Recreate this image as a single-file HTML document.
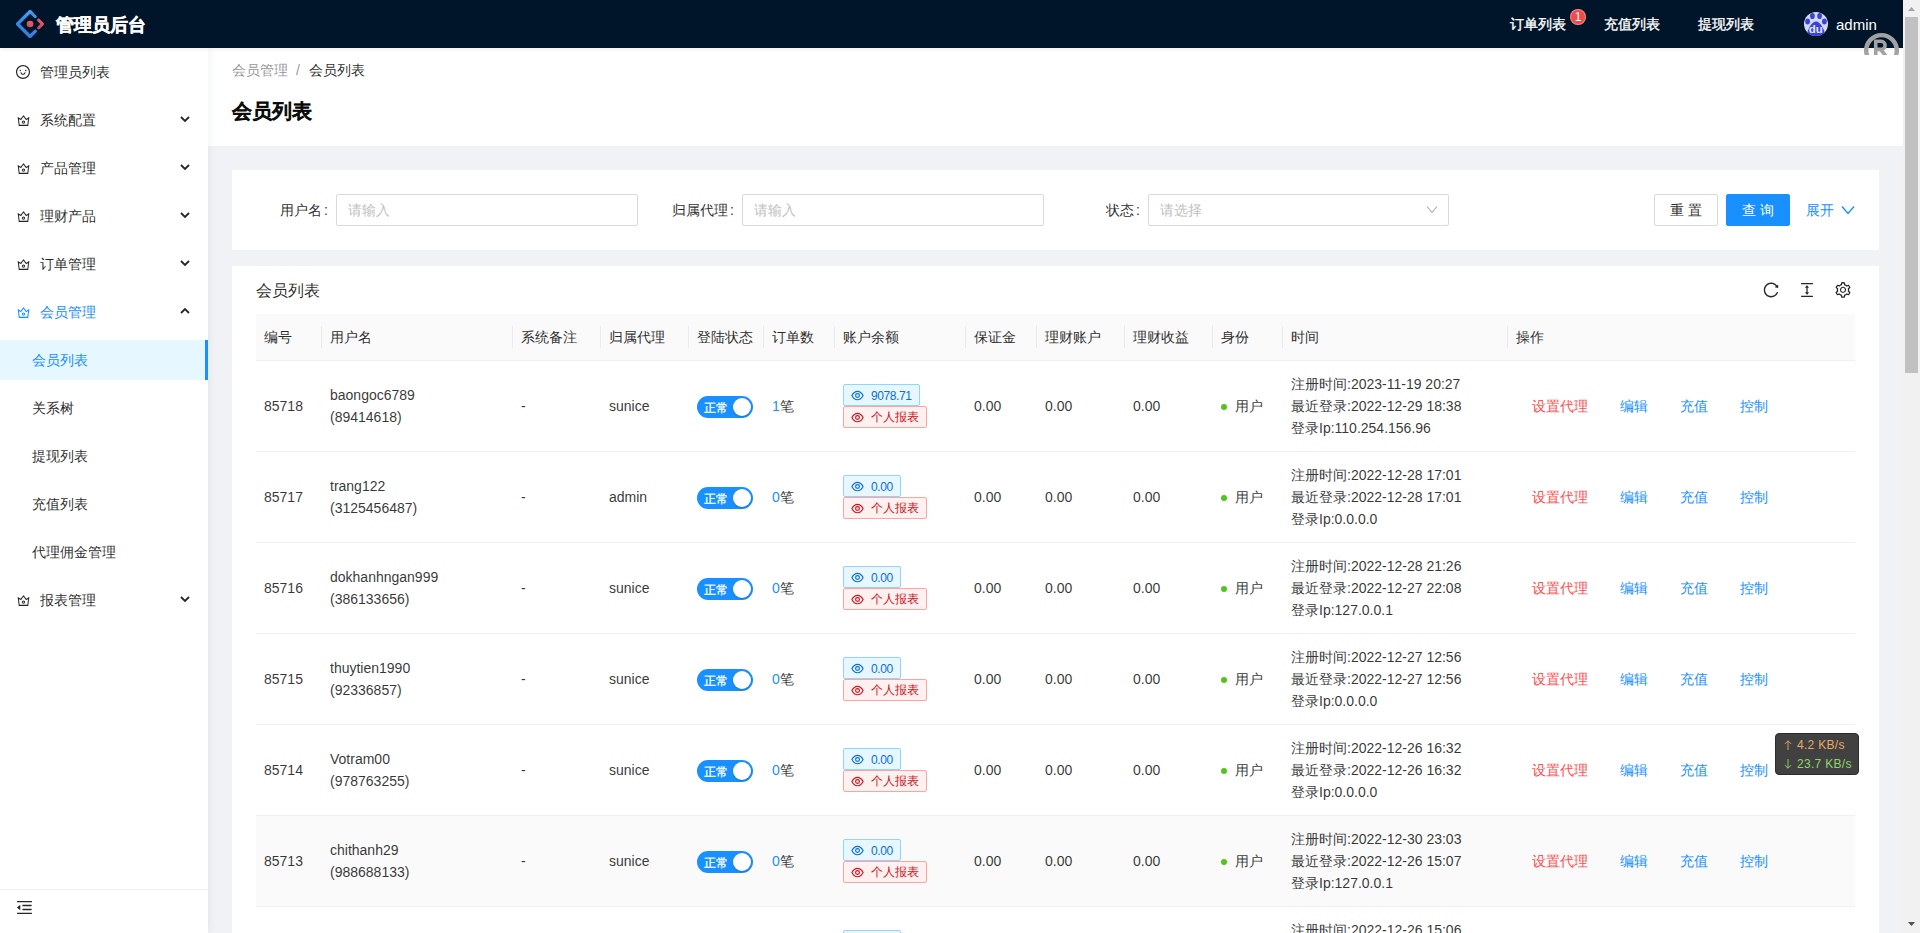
<!DOCTYPE html><html><head><meta charset="utf-8"><title>会员列表</title><style>
*{box-sizing:border-box;margin:0;padding:0}
html,body{width:1920px;height:933px;overflow:hidden;background:#f0f2f5}
body{position:relative;font-family:"Liberation Sans",sans-serif;font-size:14px;color:rgba(0,0,0,.85);line-height:22px}
.abs{position:absolute}
#hdr{left:0;top:0;width:1903px;height:48px;background:#001529;color:#fff;z-index:3;box-shadow:0 1px 4px rgba(0,21,41,.08)}
#side{left:0;top:48px;width:208px;height:885px;background:#fff;box-shadow:2px 0 8px 0 rgba(29,35,41,.05);z-index:2}
.mi{position:absolute;left:0;width:208px;height:40px;line-height:40px}
.mi .ic{position:absolute;left:16px;top:13px}
.mi .tx{position:absolute;left:40px;top:0}
.mi .ar{position:absolute;left:180px;top:15px}
.sub .tx{left:32px}
.sel{background:#e6f7ff;color:#1890ff}
.sel::after{content:"";position:absolute;right:0;top:0;bottom:0;border-right:3px solid #1890ff}
#phdr{left:208px;top:48px;width:1695px;height:98px;background:#fff}
.card{background:#fff}
.inp{position:absolute;height:32px;border:1px solid #d9d9d9;border-radius:2px;background:#fff;color:#bfbfbf;padding-left:11px;line-height:30px}
.lbl{position:absolute;line-height:32px;text-align:right}
.btn{position:absolute;height:32px;border:1px solid #d9d9d9;border-radius:2px;background:#fff;text-align:center;line-height:30px}
.btnp{background:#1890ff;border-color:#1890ff;color:#fff}
table{border-collapse:collapse;table-layout:fixed;width:1599px}
th{position:relative;background:#fafafa;font-weight:500;text-align:left;padding:12px 8px;border-bottom:1px solid #f0f0f0;height:46px}
th.s::before{content:"";position:absolute;right:0;top:50%;width:1px;height:22px;margin-top:-11px;background:rgba(0,0,0,.06)}
td{padding:12px 8px;border-bottom:1px solid #f0f0f0;height:91px;color:rgba(0,0,0,.8);vertical-align:middle;word-break:keep-all;white-space:nowrap}
tr.hov td{background:#fafafa}
.sw{display:inline-block;position:relative;width:56px;height:22px;border-radius:11px;background:#1890ff;vertical-align:middle}
.sw .k{position:absolute;right:2px;top:2px;width:18px;height:18px;border-radius:9px;background:#fff;box-shadow:0 1px 2px rgba(0,35,11,.2)}
.sw .t{position:absolute;left:7px;top:1px;line-height:22px;color:#fff;font-size:12px;-webkit-text-stroke:.3px #fff}
.tag{display:inline-block;height:22px;line-height:20px;padding:0 7px;border:1px solid;border-radius:2px;font-size:12px;white-space:nowrap}
.tb{color:#096dd9;background:#e6f7ff;border-color:#91d5ff;letter-spacing:-.4px}
.tr{color:#cf1322;background:#fff1f0;border-color:#ffa39e}
.tags{display:flex;flex-direction:column;align-items:flex-start}
.tag svg{vertical-align:-3px;margin-right:7px}
.tag .n{position:relative;top:1px}
.dot{display:inline-block;width:6px;height:6px;border-radius:3px;background:#52c41a;vertical-align:middle;margin-right:8px;position:relative;top:0}
.lk{color:#1890ff}
.lr{color:#ff4d4f}
</style></head><body>
<div id="hdr" class="abs">
<div class="abs" style="left:16px;top:10px;width:28px;height:28px"><svg width="28" height="28" viewBox="0 0 200 200"><defs><linearGradient x1="62.1%" y1="0%" x2="108.2%" y2="37.9%" id="la"><stop stop-color="#3f86e0" offset="0%"/><stop stop-color="#4aa6ee" offset="100%"/></linearGradient><linearGradient x1="69.6%" y1="0%" x2="54%" y2="108.5%" id="lb"><stop stop-color="#4aa6ee" offset="0%"/><stop stop-color="#3a8ae4" offset="37.9%"/><stop stop-color="#3478dc" offset="100%"/></linearGradient><linearGradient x1="69.7%" y1="-12.6%" x2="16.7%" y2="117.4%" id="lc"><stop stop-color="#e86a6a" offset="0%"/><stop stop-color="#e05060" offset="41.5%"/><stop stop-color="#d84050" offset="100%"/></linearGradient><linearGradient x1="68.1%" y1="-35.7%" x2="30.4%" y2="114.7%" id="ld"><stop stop-color="#e87070" offset="0%"/><stop stop-color="#e05560" offset="51.3%"/><stop stop-color="#d84a55" offset="100%"/></linearGradient></defs><g fill="none" fill-rule="nonzero"><path d="M91.588 4.177L4.18 91.513a11.98 11.98 0 000 16.974l87.408 87.336a12.005 12.005 0 0016.989 0l36.648-36.618c4.209-4.205 4.209-11.023 0-15.228-4.208-4.205-11.031-4.205-15.24 0l-27.783 27.76c-1.17 1.169-2.945 1.169-4.114 0L28.219 102.24c-1.170-1.169-1.170-2.942 0-4.110l69.870-69.764c1.169-1.168 2.944-1.168 4.113 0l27.783 27.760c4.209 4.205 11.032 4.205 15.240 0 4.209-4.205 4.209-11.022 0-15.227L108.581 4.056c-4.719-4.594-12.312-4.557-16.993.12z" fill="url(#la)"/><path d="M91.588 4.177L4.18 91.513a11.98 11.98 0 000 16.974l87.408 87.336a12.005 12.005 0 0016.989 0l36.648-36.618c4.209-4.205 4.209-11.023 0-15.228-4.208-4.205-11.031-4.205-15.24 0l-27.783 27.76c-1.17 1.169-2.945 1.169-4.114 0L28.219 102.24c-1.17-1.169-1.17-2.942 0-4.11l69.87-69.764c2.912-2.51 7.664-7.596 14.642-8.786 5.186-.883 10.855 1.062 17.009 5.837L108.58 4.056c-4.719-4.594-12.312-4.557-16.993.12z" fill="url(#lb)"/><path d="M153.686 135.855c4.208 4.205 11.031 4.205 15.24 0l27.034-27.012c4.7-4.696 4.7-12.28 0-16.974l-27.27-27.15c-4.218-4.2-11.043-4.195-15.254.01-4.209 4.205-4.209 11.022 0 15.227l18.418 18.403c1.17 1.169 1.17 2.943 0 4.111l-18.168 18.154c-4.209 4.205-4.209 11.023 0 15.228z" fill="url(#lc)"/><ellipse fill="url(#ld)" cx="100.519" cy="100.437" rx="23.6" ry="23.581"/></g></svg></div>
<div class="abs" style="left:56px;top:13px;font-size:18px;font-weight:700;-webkit-text-stroke:.4px #fff;line-height:24px;color:#fff">管理员后台</div>
<div class="abs" style="left:1510px;top:13px;line-height:22px;-webkit-text-stroke:.35px #fff;color:#fff">订单列表</div>
<div class="abs" style="left:1604px;top:13px;line-height:22px;-webkit-text-stroke:.35px #fff;color:#fff">充值列表</div>
<div class="abs" style="left:1698px;top:13px;line-height:22px;-webkit-text-stroke:.35px #fff;color:#fff">提现列表</div>
<div class="abs" style="left:1570px;top:9px;width:16px;height:16px;border-radius:8px;background:#f04a4a;box-shadow:inset 0 0 0 1px rgba(255,255,255,.35);color:#fff;font-size:12px;line-height:16px;text-align:center">1</div>
<div class="abs" style="left:1804px;top:12px;width:24px;height:24px;border-radius:12px;background:#d6d8fb;overflow:hidden"><svg width="24" height="24" viewBox="0 0 24 24"><g fill="#3a44d2"><ellipse cx="8.4" cy="4" rx="2.4" ry="3.1"/><ellipse cx="15.6" cy="4" rx="2.4" ry="3.1"/><ellipse cx="3.6" cy="9.6" rx="2.4" ry="3"/><ellipse cx="20.4" cy="9.6" rx="2.4" ry="3"/><path d="M3 24C3 18 7.5 9.6 12 9.6S21 18 21 24Z"/></g><text x="11.8" y="21.2" font-size="11.5" font-weight="700" fill="#e6e6ff" text-anchor="middle" font-family="Liberation Sans">du</text></svg></div>
<div class="abs" style="left:1836px;top:14px;line-height:22px;font-size:15px;color:#fff">admin</div>
</div>
<div class="abs" style="left:1860px;top:30px;width:44px;height:25px;overflow:hidden;z-index:5"><svg width="44" height="44" viewBox="0 0 44 44"><circle cx="21.5" cy="20.4" r="15.3" fill="none" stroke="#a2a2a2" stroke-width="4.4"/><path d="M15.75 9.5V27M14 11.2H21A4.1 4.1 0 0 1 21 19.4H14M20.5 19.4L26.8 27" fill="none" stroke="#a2a2a2" stroke-width="3.6"/></svg></div>
<div id="side" class="abs">
<div class="mi" style="top:4px;color:rgba(0,0,0,.85)">
<span class="ic" style="left:15px;top:12px"><svg width="16" height="16" viewBox="0 0 1024 1024" fill="rgba(0,0,0,.85)" style="display:block"><path d="M288 421a48 48 0 1096 0 48 48 0 10-96 0zm352 0a48 48 0 1096 0 48 48 0 10-96 0zM512 64C264.6 64 64 264.6 64 512s200.6 448 448 448 448-200.6 448-448S759.4 64 512 64zm263 711c-34.2 34.2-74 61-118.3 79.8C611 874.2 562.3 884 512 884c-50.3 0-99-9.8-144.8-29.2A370.4 370.4 0 01248.9 775c-34.2-34.2-61-74-79.8-118.3C149.8 611 140 562.3 140 512s9.8-99 29.2-144.8A370.4 370.4 0 01249 248.9c34.2-34.2 74-61 118.3-79.8C413 149.8 461.7 140 512 140c50.3 0 99 9.8 144.8 29.2A370.4 370.4 0 01775.1 249c34.2 34.2 61 74 79.8 118.3C874.2 413 884 461.7 884 512s-9.8 99-29.2 144.8A368.89 368.89 0 01775 775zM664 533h-48.1c-4.2 0-7.8 3.2-8.1 7.4C604 589.9 562.5 629 512 629s-92.1-39.1-95.8-88.6c-.3-4.2-3.9-7.4-8.1-7.4H360a8 8 0 00-8 8.4c4.4 84.3 74.5 151.6 160 151.6s155.6-67.3 160-151.6a8 8 0 00-8-8.4z"/></svg></span>
<span class="tx">管理员列表</span>
</div>
<div class="mi" style="top:52px;color:rgba(0,0,0,.85)">
<span class="ic" style="left:15.5px;top:12.5px"><svg width="15" height="15" viewBox="0 0 1024 1024" fill="rgba(0,0,0,.85)" style="display:block"><path d="M899.6 276.5L705 396.4 518.4 147.5a8.06 8.06 0 00-12.9 0L319 396.4 124.3 276.5c-5.7-3.5-13.1.2-12.2 6.9L188.5 865c1.1 7.9 7.9 14 16 14h615.1c8 0 14.9-6 15.9-14l76.4-581.6c.8-6.7-6.5-10.4-12.3-6.9zm-126 534.1H250.3l-53.8-409.4 139.8 86.1L512 252.9l175.7 234.4 139.8-86.1-53.9 409.4zM512 509c-62.1 0-112.6 50.5-112.6 112.6S449.9 734.2 512 734.2s112.6-50.5 112.6-112.6S574.1 509 512 509zm0 160.9c-26.6 0-48.2-21.6-48.2-48.3 0-26.6 21.6-48.3 48.2-48.3s48.2 21.6 48.2 48.3c0 26.6-21.6 48.3-48.2 48.3z"/></svg></span>
<span class="tx">系统配置</span>
<svg class="ar" width="10" height="8" viewBox="0 0 10 8"><polyline points="1,2 5,6 9,2" fill="none" stroke="rgba(0,0,0,.85)" stroke-width="1.8"/></svg>
</div>
<div class="mi" style="top:100px;color:rgba(0,0,0,.85)">
<span class="ic" style="left:15.5px;top:12.5px"><svg width="15" height="15" viewBox="0 0 1024 1024" fill="rgba(0,0,0,.85)" style="display:block"><path d="M899.6 276.5L705 396.4 518.4 147.5a8.06 8.06 0 00-12.9 0L319 396.4 124.3 276.5c-5.7-3.5-13.1.2-12.2 6.9L188.5 865c1.1 7.9 7.9 14 16 14h615.1c8 0 14.9-6 15.9-14l76.4-581.6c.8-6.7-6.5-10.4-12.3-6.9zm-126 534.1H250.3l-53.8-409.4 139.8 86.1L512 252.9l175.7 234.4 139.8-86.1-53.9 409.4zM512 509c-62.1 0-112.6 50.5-112.6 112.6S449.9 734.2 512 734.2s112.6-50.5 112.6-112.6S574.1 509 512 509zm0 160.9c-26.6 0-48.2-21.6-48.2-48.3 0-26.6 21.6-48.3 48.2-48.3s48.2 21.6 48.2 48.3c0 26.6-21.6 48.3-48.2 48.3z"/></svg></span>
<span class="tx">产品管理</span>
<svg class="ar" width="10" height="8" viewBox="0 0 10 8"><polyline points="1,2 5,6 9,2" fill="none" stroke="rgba(0,0,0,.85)" stroke-width="1.8"/></svg>
</div>
<div class="mi" style="top:148px;color:rgba(0,0,0,.85)">
<span class="ic" style="left:15.5px;top:12.5px"><svg width="15" height="15" viewBox="0 0 1024 1024" fill="rgba(0,0,0,.85)" style="display:block"><path d="M899.6 276.5L705 396.4 518.4 147.5a8.06 8.06 0 00-12.9 0L319 396.4 124.3 276.5c-5.7-3.5-13.1.2-12.2 6.9L188.5 865c1.1 7.9 7.9 14 16 14h615.1c8 0 14.9-6 15.9-14l76.4-581.6c.8-6.7-6.5-10.4-12.3-6.9zm-126 534.1H250.3l-53.8-409.4 139.8 86.1L512 252.9l175.7 234.4 139.8-86.1-53.9 409.4zM512 509c-62.1 0-112.6 50.5-112.6 112.6S449.9 734.2 512 734.2s112.6-50.5 112.6-112.6S574.1 509 512 509zm0 160.9c-26.6 0-48.2-21.6-48.2-48.3 0-26.6 21.6-48.3 48.2-48.3s48.2 21.6 48.2 48.3c0 26.6-21.6 48.3-48.2 48.3z"/></svg></span>
<span class="tx">理财产品</span>
<svg class="ar" width="10" height="8" viewBox="0 0 10 8"><polyline points="1,2 5,6 9,2" fill="none" stroke="rgba(0,0,0,.85)" stroke-width="1.8"/></svg>
</div>
<div class="mi" style="top:196px;color:rgba(0,0,0,.85)">
<span class="ic" style="left:15.5px;top:12.5px"><svg width="15" height="15" viewBox="0 0 1024 1024" fill="rgba(0,0,0,.85)" style="display:block"><path d="M899.6 276.5L705 396.4 518.4 147.5a8.06 8.06 0 00-12.9 0L319 396.4 124.3 276.5c-5.7-3.5-13.1.2-12.2 6.9L188.5 865c1.1 7.9 7.9 14 16 14h615.1c8 0 14.9-6 15.9-14l76.4-581.6c.8-6.7-6.5-10.4-12.3-6.9zm-126 534.1H250.3l-53.8-409.4 139.8 86.1L512 252.9l175.7 234.4 139.8-86.1-53.9 409.4zM512 509c-62.1 0-112.6 50.5-112.6 112.6S449.9 734.2 512 734.2s112.6-50.5 112.6-112.6S574.1 509 512 509zm0 160.9c-26.6 0-48.2-21.6-48.2-48.3 0-26.6 21.6-48.3 48.2-48.3s48.2 21.6 48.2 48.3c0 26.6-21.6 48.3-48.2 48.3z"/></svg></span>
<span class="tx">订单管理</span>
<svg class="ar" width="10" height="8" viewBox="0 0 10 8"><polyline points="1,2 5,6 9,2" fill="none" stroke="rgba(0,0,0,.85)" stroke-width="1.8"/></svg>
</div>
<div class="mi" style="top:244px;color:#1890ff">
<span class="ic" style="left:15.5px;top:12.5px"><svg width="15" height="15" viewBox="0 0 1024 1024" fill="#1890ff" style="display:block"><path d="M899.6 276.5L705 396.4 518.4 147.5a8.06 8.06 0 00-12.9 0L319 396.4 124.3 276.5c-5.7-3.5-13.1.2-12.2 6.9L188.5 865c1.1 7.9 7.9 14 16 14h615.1c8 0 14.9-6 15.9-14l76.4-581.6c.8-6.7-6.5-10.4-12.3-6.9zm-126 534.1H250.3l-53.8-409.4 139.8 86.1L512 252.9l175.7 234.4 139.8-86.1-53.9 409.4zM512 509c-62.1 0-112.6 50.5-112.6 112.6S449.9 734.2 512 734.2s112.6-50.5 112.6-112.6S574.1 509 512 509zm0 160.9c-26.6 0-48.2-21.6-48.2-48.3 0-26.6 21.6-48.3 48.2-48.3s48.2 21.6 48.2 48.3c0 26.6-21.6 48.3-48.2 48.3z"/></svg></span>
<span class="tx">会员管理</span>
<svg class="ar" width="10" height="8" viewBox="0 0 10 8"><polyline points="1,6 5,2 9,6" fill="none" stroke="rgba(0,0,0,.85)" stroke-width="1.8"/></svg>
</div>
<div class="mi sub sel" style="top:292px;color:#1890ff">
<span class="tx">会员列表</span>
</div>
<div class="mi sub" style="top:340px;color:rgba(0,0,0,.85)">
<span class="tx">关系树</span>
</div>
<div class="mi sub" style="top:388px;color:rgba(0,0,0,.85)">
<span class="tx">提现列表</span>
</div>
<div class="mi sub" style="top:436px;color:rgba(0,0,0,.85)">
<span class="tx">充值列表</span>
</div>
<div class="mi sub" style="top:484px;color:rgba(0,0,0,.85)">
<span class="tx">代理佣金管理</span>
</div>
<div class="mi" style="top:532px;color:rgba(0,0,0,.85)">
<span class="ic" style="left:15.5px;top:12.5px"><svg width="15" height="15" viewBox="0 0 1024 1024" fill="rgba(0,0,0,.85)" style="display:block"><path d="M899.6 276.5L705 396.4 518.4 147.5a8.06 8.06 0 00-12.9 0L319 396.4 124.3 276.5c-5.7-3.5-13.1.2-12.2 6.9L188.5 865c1.1 7.9 7.9 14 16 14h615.1c8 0 14.9-6 15.9-14l76.4-581.6c.8-6.7-6.5-10.4-12.3-6.9zm-126 534.1H250.3l-53.8-409.4 139.8 86.1L512 252.9l175.7 234.4 139.8-86.1-53.9 409.4zM512 509c-62.1 0-112.6 50.5-112.6 112.6S449.9 734.2 512 734.2s112.6-50.5 112.6-112.6S574.1 509 512 509zm0 160.9c-26.6 0-48.2-21.6-48.2-48.3 0-26.6 21.6-48.3 48.2-48.3s48.2 21.6 48.2 48.3c0 26.6-21.6 48.3-48.2 48.3z"/></svg></span>
<span class="tx">报表管理</span>
<svg class="ar" width="10" height="8" viewBox="0 0 10 8"><polyline points="1,2 5,6 9,2" fill="none" stroke="rgba(0,0,0,.85)" stroke-width="1.8"/></svg>
</div>
<div class="abs" style="left:0;top:841px;width:208px;border-top:1px solid rgba(0,0,0,.06)"></div>
<div class="abs" style="left:15px;top:850px"><svg width="19" height="19" viewBox="0 0 1024 1024" fill="rgba(0,0,0,.85)" style="display:block"><path d="M408 442h480c4.4 0 8-3.6 8-8v-56c0-4.4-3.6-8-8-8H408c-4.4 0-8 3.6-8 8v56c0 4.4 3.6 8 8 8zm-8 204c0 4.4 3.6 8 8 8h480c4.4 0 8-3.6 8-8v-56c0-4.4-3.6-8-8-8H408c-4.4 0-8 3.6-8 8v56zm504-486H120c-4.4 0-8 3.6-8 8v56c0 4.4 3.6 8 8 8h784c4.4 0 8-3.6 8-8v-56c0-4.4-3.6-8-8-8zm0 632H120c-4.4 0-8 3.6-8 8v56c0 4.4 3.6 8 8 8h784c4.4 0 8-3.6 8-8v-56c0-4.4-3.6-8-8-8zM115.4 518.9L271.7 642c5.8 4.6 14.4.5 14.4-6.9V388.9c0-7.4-8.5-11.5-14.4-6.9L115.4 505.1a8.740 8.740 0 000 13.8z"/></svg></div>
</div>
<div id="phdr" class="abs">
<div class="abs" style="left:24px;top:11px;color:rgba(0,0,0,.45)">会员管理<span style="margin:0 9px 0 8px">/</span><span style="color:rgba(0,0,0,.85)">会员列表</span></div>
<div class="abs" style="left:24px;top:49px;font-size:20px;font-weight:700;-webkit-text-stroke:.3px rgba(0,0,0,.85);line-height:28px;color:rgba(0,0,0,.85)">会员列表</div>
</div>
<div class="abs card" style="left:232px;top:170px;width:1647px;height:80px">
<div class="lbl" style="left:24px;top:24px;width:80px;padding-right:8px">用户名<span style="margin-left:2px;margin-right:0">:</span></div>
<div class="lbl" style="left:430px;top:24px;width:80px;padding-right:8px">归属代理<span style="margin-left:2px;margin-right:0">:</span></div>
<div class="lbl" style="left:836px;top:24px;width:80px;padding-right:8px">状态<span style="margin-left:2px;margin-right:0">:</span></div>
<div class="inp" style="left:104px;top:24px;width:302px">请输入</div>
<div class="inp" style="left:510px;top:24px;width:302px">请输入</div>
<div class="inp" style="left:916px;top:24px;width:301px">请选择<svg style="position:absolute;left:277px;top:10px" width="12" height="9" viewBox="0 0 12 9"><polyline points="1,1.5 6,7.5 11,1.5" fill="none" stroke="#a8a8a8" stroke-width="1.1"/></svg></div>
<div class="btn" style="left:1422px;top:24px;width:64px">重 置</div>
<div class="btn btnp" style="left:1494px;top:24px;width:64px">查 询</div>
<div class="abs" style="left:1574px;top:29px;color:#1890ff">展开</div><svg class="abs" style="left:1609px;top:35px" width="14" height="10" viewBox="0 0 14 10"><polyline points="1,1.5 7,8.5 13,1.5" fill="none" stroke="#1890ff" stroke-width="1.4"/></svg>
</div>
<div class="abs card" style="left:232px;top:266px;width:1647px;height:667px;overflow:hidden">
<div class="abs" style="left:24px;top:13px;font-size:16px;line-height:24px">会员列表</div>
<div class="abs" style="left:1530px;top:15px"><svg width="18" height="18" viewBox="0 0 1024 1024" fill="rgba(0,0,0,.85)" style="display:block"><path d="M909.1 209.3l-56.4 44.1C775.8 155.1 656.2 92 521.9 92 290 92 102.3 279.5 102 511.5 101.7 743.7 289.8 932 521.9 932c181.3 0 335.8-115 394.6-276.1 1.5-4.2-.7-8.9-4.9-10.3l-56.7-19.5a8 8 0 00-10.1 4.8c-1.8 5-3.8 10-5.9 14.9-17.3 41-42.1 77.8-73.7 109.4A344.77 344.77 0 01655.9 829c-42.3 17.9-87.4 27-133.8 27-46.5 0-91.5-9.1-133.8-27A341.5 341.5 0 01279 755.2a342.16 342.16 0 01-73.700-109.4c-17.9-42.4-27-87.4-27-133.9s9.1-91.5 27-133.9c17.3-41 42.1-77.8 73.7-109.4 31.6-31.6 68.4-56.4 109.3-73.8 42.3-17.9 87.4-27 133.8-27 46.5 0 91.5 9.1 133.8 27a341.5 341.5 0 01109.3 73.8c9.9 9.9 19.2 20.4 27.8 31.4l-60.2 47a8 8 0 003 14.1l175.6 43c5 1.2 9.9-2.6 9.9-7.7l.8-180.9c-.1-6.6-7.8-10.3-13-6.2z"/></svg></div>
<div class="abs" style="left:1566px;top:15px"><svg width="18" height="18" viewBox="0 0 1024 1024" fill="rgba(0,0,0,.85)" style="display:block"><path d="M840 836H184c-4.4 0-8 3.6-8 8v60c0 4.4 3.6 8 8 8h656c4.4 0 8-3.6 8-8v-60c0-4.4-3.6-8-8-8zm0-724H184c-4.4 0-8 3.6-8 8v60c0 4.4 3.6 8 8 8h656c4.4 0 8-3.6 8-8v-60c0-4.4-3.6-8-8-8zM610.8 378c6 0 9.4-7 5.7-11.7L515.7 238.7a7.14 7.14 0 00-11.3 0L403.6 366.3a7.23 7.23 0 005.7 11.7H476v268h-62.8c-6 0-9.4 7-5.7 11.7l100.8 127.5c2.9 3.7 8.5 3.7 11.3 0l100.8-127.5c3.7-4.7.4-11.700-5.7-11.7H548V378h62.8z"/></svg></div>
<div class="abs" style="left:1602px;top:15px"><svg width="18" height="18" viewBox="0 0 1024 1024" fill="rgba(0,0,0,.85)" style="display:block"><path d="M924.8 625.7l-65.5-56c3.1-19 4.7-38.4 4.7-57.8s-1.6-38.8-4.7-57.8l65.5-56a32.03 32.03 0 009.3-35.2l-.9-2.6a443.74 443.74 0 00-79.7-137.9l-1.8-2.1a32.12 32.12 0 00-35.1-9.5l-81.3 28.9c-30-24.6-63.5-44-99.7-57.6l-15.7-85a32.05 32.05 0 00-25.8-25.7l-2.7-.5c-52.1-9.4-106.9-9.4-159 0l-2.7.5a32.05 32.05 0 00-25.8 25.7l-15.8 85.4a351.86 351.86 0 00-99 57.4l-81.9-29.1a32 32 0 00-35.1 9.5l-1.8 2.1a446.02 446.02 0 00-79.7 137.9l-.9 2.6c-4.5 12.5-.8 26.5 9.3 35.2l66.3 56.6c-3.1 18.8-4.6 38-4.6 57.1 0 19.2 1.5 38.4 4.6 57.1L99 625.5a32.03 32.03 0 00-9.3 35.2l.9 2.6c18.1 50.4 44.9 96.9 79.7 137.9l1.8 2.1a32.12 32.12 0 0035.1 9.5l81.9-29.1c29.8 24.5 63.1 43.9 99 57.4l15.8 85.4a32.05 32.05 0 0025.8 25.7l2.7.5a449.4 449.4 0 00159 0l2.7-.5a32.05 32.05 0 0025.8-25.7l15.7-85a350 350 0 0099.7-57.6l81.3 28.9a32 32 0 0035.1-9.5l1.8-2.1c34.8-41.1 61.6-87.5 79.7-137.9l.9-2.6c4.5-12.3.8-26.3-9.3-35zM788.3 465.9c2.5 15.1 3.8 30.6 3.8 46.1s-1.3 31-3.8 46.1l-6.6 40.1 74.7 63.9a370.03 370.03 0 01-42.6 73.6L721 702.8l-31.4 25.8c-23.9 19.6-50.5 35-79.3 45.8l-38.1 14.3-17.9 97a377.5 377.5 0 01-85 0l-17.9-97.2-37.8-14.5c-28.5-10.8-55-26.2-78.7-45.7l-31.4-25.9-93.4 33.2c-17-22.9-31.2-47.6-42.6-73.6l75.5-64.5-6.5-40c-2.4-14.9-3.7-30.3-3.7-45.5 0-15.3 1.2-30.6 3.7-45.5l6.5-40-75.5-64.5c11.3-26.1 25.6-50.7 42.6-73.6l93.4 33.2 31.4-25.9c23.7-19.5 50.2-34.9 78.7-45.7l37.9-14.3 17.9-97.2c28.1-3.2 56.8-3.2 85 0l17.9 97 38.1 14.3c28.7 10.8 55.4 26.2 79.3 45.8l31.4 25.8 92.8-32.9c17 22.9 31.2 47.6 42.6 73.6L781.8 426l6.5 39.9zM512 326c-97.2 0-176 78.8-176 176s78.8 176 176 176 176-78.8 176-176-78.8-176-176-176zm79.2 255.2A111.6 111.6 0 01512 614c-29.9 0-58-11.7-79.2-32.8A111.6 111.6 0 01400 502c0-29.9 11.7-58 32.8-79.2C454 401.6 482.1 390 512 390c29.9 0 58 11.6 79.2 32.8A111.6 111.6 0 01624 502c0 29.9-11.7 58-32.8 79.2z"/></svg></div>
<div class="abs" style="left:24px;top:48px">
<table><colgroup><col style="width:66px"><col style="width:191px"><col style="width:88px"><col style="width:88px"><col style="width:75px"><col style="width:71px"><col style="width:131px"><col style="width:71px"><col style="width:88px"><col style="width:88px"><col style="width:70px"><col style="width:225px"><col style="width:347px"></colgroup><thead><tr>
<th class="s">编号</th>
<th class="s">用户名</th>
<th class="s">系统备注</th>
<th class="s">归属代理</th>
<th class="s">登陆状态</th>
<th class="s">订单数</th>
<th class="s">账户余额</th>
<th class="s">保证金</th>
<th class="s">理财账户</th>
<th class="s">理财收益</th>
<th class="s">身份</th>
<th class="s">时间</th>
<th>操作</th>
</tr></thead><tbody>
<tr>
<td>85718</td>
<td>baongoc6789<br>(89414618)</td>
<td>-</td>
<td>sunice</td>
<td><span class="sw"><span class="t">正常</span><span class="k"></span></span></td>
<td><span class="lk">1</span>笔</td>
<td><div class="tags"><span class="tag tb"><svg width="13" height="13" viewBox="0 0 13 13"><path d="M0.9 6.5C2.4 3.6 4.3 2.3 6.5 2.3S10.6 3.6 12.1 6.5C10.6 9.4 8.7 10.7 6.5 10.7S2.4 9.4 0.9 6.5Z" fill="none" stroke="#096dd9" stroke-width="1.15"/><circle cx="6.5" cy="6.5" r="1.9" fill="none" stroke="#096dd9" stroke-width="1.15"/></svg><span class="n">9078.71</span></span><span class="tag tr"><svg width="13" height="13" viewBox="0 0 13 13"><path d="M0.9 6.5C2.4 3.6 4.3 2.3 6.5 2.3S10.6 3.6 12.1 6.5C10.6 9.4 8.7 10.7 6.5 10.7S2.4 9.4 0.9 6.5Z" fill="none" stroke="#cf1322" stroke-width="1.15"/><circle cx="6.5" cy="6.5" r="1.9" fill="none" stroke="#cf1322" stroke-width="1.15"/></svg>个人报表</span></div></td>
<td>0.00</td><td>0.00</td><td>0.00</td>
<td><span class="dot"></span>用户</td>
<td>注册时间:2023-11-19 20:27<br>最近登录:2022-12-29 18:38<br>登录Ip:110.254.156.96</td>
<td><span class="lr" style="margin-left:16px">设置代理</span><span class="lk" style="margin-left:32px">编辑</span><span class="lk" style="margin-left:32px">充值</span><span class="lk" style="margin-left:32px">控制</span></td>
</tr>
<tr>
<td>85717</td>
<td>trang122<br>(3125456487)</td>
<td>-</td>
<td>admin</td>
<td><span class="sw"><span class="t">正常</span><span class="k"></span></span></td>
<td><span class="lk">0</span>笔</td>
<td><div class="tags"><span class="tag tb"><svg width="13" height="13" viewBox="0 0 13 13"><path d="M0.9 6.5C2.4 3.6 4.3 2.3 6.5 2.3S10.6 3.6 12.1 6.5C10.6 9.4 8.7 10.7 6.5 10.7S2.4 9.4 0.9 6.5Z" fill="none" stroke="#096dd9" stroke-width="1.15"/><circle cx="6.5" cy="6.5" r="1.9" fill="none" stroke="#096dd9" stroke-width="1.15"/></svg><span class="n">0.00</span></span><span class="tag tr"><svg width="13" height="13" viewBox="0 0 13 13"><path d="M0.9 6.5C2.4 3.6 4.3 2.3 6.5 2.3S10.6 3.6 12.1 6.5C10.6 9.4 8.7 10.7 6.5 10.7S2.4 9.4 0.9 6.5Z" fill="none" stroke="#cf1322" stroke-width="1.15"/><circle cx="6.5" cy="6.5" r="1.9" fill="none" stroke="#cf1322" stroke-width="1.15"/></svg>个人报表</span></div></td>
<td>0.00</td><td>0.00</td><td>0.00</td>
<td><span class="dot"></span>用户</td>
<td>注册时间:2022-12-28 17:01<br>最近登录:2022-12-28 17:01<br>登录Ip:0.0.0.0</td>
<td><span class="lr" style="margin-left:16px">设置代理</span><span class="lk" style="margin-left:32px">编辑</span><span class="lk" style="margin-left:32px">充值</span><span class="lk" style="margin-left:32px">控制</span></td>
</tr>
<tr>
<td>85716</td>
<td>dokhanhngan999<br>(386133656)</td>
<td>-</td>
<td>sunice</td>
<td><span class="sw"><span class="t">正常</span><span class="k"></span></span></td>
<td><span class="lk">0</span>笔</td>
<td><div class="tags"><span class="tag tb"><svg width="13" height="13" viewBox="0 0 13 13"><path d="M0.9 6.5C2.4 3.6 4.3 2.3 6.5 2.3S10.6 3.6 12.1 6.5C10.6 9.4 8.7 10.7 6.5 10.7S2.4 9.4 0.9 6.5Z" fill="none" stroke="#096dd9" stroke-width="1.15"/><circle cx="6.5" cy="6.5" r="1.9" fill="none" stroke="#096dd9" stroke-width="1.15"/></svg><span class="n">0.00</span></span><span class="tag tr"><svg width="13" height="13" viewBox="0 0 13 13"><path d="M0.9 6.5C2.4 3.6 4.3 2.3 6.5 2.3S10.6 3.6 12.1 6.5C10.6 9.4 8.7 10.7 6.5 10.7S2.4 9.4 0.9 6.5Z" fill="none" stroke="#cf1322" stroke-width="1.15"/><circle cx="6.5" cy="6.5" r="1.9" fill="none" stroke="#cf1322" stroke-width="1.15"/></svg>个人报表</span></div></td>
<td>0.00</td><td>0.00</td><td>0.00</td>
<td><span class="dot"></span>用户</td>
<td>注册时间:2022-12-28 21:26<br>最近登录:2022-12-27 22:08<br>登录Ip:127.0.0.1</td>
<td><span class="lr" style="margin-left:16px">设置代理</span><span class="lk" style="margin-left:32px">编辑</span><span class="lk" style="margin-left:32px">充值</span><span class="lk" style="margin-left:32px">控制</span></td>
</tr>
<tr>
<td>85715</td>
<td>thuytien1990<br>(92336857)</td>
<td>-</td>
<td>sunice</td>
<td><span class="sw"><span class="t">正常</span><span class="k"></span></span></td>
<td><span class="lk">0</span>笔</td>
<td><div class="tags"><span class="tag tb"><svg width="13" height="13" viewBox="0 0 13 13"><path d="M0.9 6.5C2.4 3.6 4.3 2.3 6.5 2.3S10.6 3.6 12.1 6.5C10.6 9.4 8.7 10.7 6.5 10.7S2.4 9.4 0.9 6.5Z" fill="none" stroke="#096dd9" stroke-width="1.15"/><circle cx="6.5" cy="6.5" r="1.9" fill="none" stroke="#096dd9" stroke-width="1.15"/></svg><span class="n">0.00</span></span><span class="tag tr"><svg width="13" height="13" viewBox="0 0 13 13"><path d="M0.9 6.5C2.4 3.6 4.3 2.3 6.5 2.3S10.6 3.6 12.1 6.5C10.6 9.4 8.7 10.7 6.5 10.7S2.4 9.4 0.9 6.5Z" fill="none" stroke="#cf1322" stroke-width="1.15"/><circle cx="6.5" cy="6.5" r="1.9" fill="none" stroke="#cf1322" stroke-width="1.15"/></svg>个人报表</span></div></td>
<td>0.00</td><td>0.00</td><td>0.00</td>
<td><span class="dot"></span>用户</td>
<td>注册时间:2022-12-27 12:56<br>最近登录:2022-12-27 12:56<br>登录Ip:0.0.0.0</td>
<td><span class="lr" style="margin-left:16px">设置代理</span><span class="lk" style="margin-left:32px">编辑</span><span class="lk" style="margin-left:32px">充值</span><span class="lk" style="margin-left:32px">控制</span></td>
</tr>
<tr>
<td>85714</td>
<td>Votram00<br>(978763255)</td>
<td>-</td>
<td>sunice</td>
<td><span class="sw"><span class="t">正常</span><span class="k"></span></span></td>
<td><span class="lk">0</span>笔</td>
<td><div class="tags"><span class="tag tb"><svg width="13" height="13" viewBox="0 0 13 13"><path d="M0.9 6.5C2.4 3.6 4.3 2.3 6.5 2.3S10.6 3.6 12.1 6.5C10.6 9.4 8.7 10.7 6.5 10.7S2.4 9.4 0.9 6.5Z" fill="none" stroke="#096dd9" stroke-width="1.15"/><circle cx="6.5" cy="6.5" r="1.9" fill="none" stroke="#096dd9" stroke-width="1.15"/></svg><span class="n">0.00</span></span><span class="tag tr"><svg width="13" height="13" viewBox="0 0 13 13"><path d="M0.9 6.5C2.4 3.6 4.3 2.3 6.5 2.3S10.6 3.6 12.1 6.5C10.6 9.4 8.7 10.7 6.5 10.7S2.4 9.4 0.9 6.5Z" fill="none" stroke="#cf1322" stroke-width="1.15"/><circle cx="6.5" cy="6.5" r="1.9" fill="none" stroke="#cf1322" stroke-width="1.15"/></svg>个人报表</span></div></td>
<td>0.00</td><td>0.00</td><td>0.00</td>
<td><span class="dot"></span>用户</td>
<td>注册时间:2022-12-26 16:32<br>最近登录:2022-12-26 16:32<br>登录Ip:0.0.0.0</td>
<td><span class="lr" style="margin-left:16px">设置代理</span><span class="lk" style="margin-left:32px">编辑</span><span class="lk" style="margin-left:32px">充值</span><span class="lk" style="margin-left:32px">控制</span></td>
</tr>
<tr class="hov">
<td>85713</td>
<td>chithanh29<br>(988688133)</td>
<td>-</td>
<td>sunice</td>
<td><span class="sw"><span class="t">正常</span><span class="k"></span></span></td>
<td><span class="lk">0</span>笔</td>
<td><div class="tags"><span class="tag tb"><svg width="13" height="13" viewBox="0 0 13 13"><path d="M0.9 6.5C2.4 3.6 4.3 2.3 6.5 2.3S10.6 3.6 12.1 6.5C10.6 9.4 8.7 10.7 6.5 10.7S2.4 9.4 0.9 6.5Z" fill="none" stroke="#096dd9" stroke-width="1.15"/><circle cx="6.5" cy="6.5" r="1.9" fill="none" stroke="#096dd9" stroke-width="1.15"/></svg><span class="n">0.00</span></span><span class="tag tr"><svg width="13" height="13" viewBox="0 0 13 13"><path d="M0.9 6.5C2.4 3.6 4.3 2.3 6.5 2.3S10.6 3.6 12.1 6.5C10.6 9.4 8.7 10.7 6.5 10.7S2.4 9.4 0.9 6.5Z" fill="none" stroke="#cf1322" stroke-width="1.15"/><circle cx="6.5" cy="6.5" r="1.9" fill="none" stroke="#cf1322" stroke-width="1.15"/></svg>个人报表</span></div></td>
<td>0.00</td><td>0.00</td><td>0.00</td>
<td><span class="dot"></span>用户</td>
<td>注册时间:2022-12-30 23:03<br>最近登录:2022-12-26 15:07<br>登录Ip:127.0.0.1</td>
<td><span class="lr" style="margin-left:16px">设置代理</span><span class="lk" style="margin-left:32px">编辑</span><span class="lk" style="margin-left:32px">充值</span><span class="lk" style="margin-left:32px">控制</span></td>
</tr>
<tr>
<td>85712</td>
<td>hoang2212<br>(12345678)</td>
<td>-</td>
<td>sunice</td>
<td><span class="sw"><span class="t">正常</span><span class="k"></span></span></td>
<td><span class="lk">0</span>笔</td>
<td><div class="tags"><span class="tag tb"><svg width="13" height="13" viewBox="0 0 13 13"><path d="M0.9 6.5C2.4 3.6 4.3 2.3 6.5 2.3S10.6 3.6 12.1 6.5C10.6 9.4 8.7 10.7 6.5 10.7S2.4 9.4 0.9 6.5Z" fill="none" stroke="#096dd9" stroke-width="1.15"/><circle cx="6.5" cy="6.5" r="1.9" fill="none" stroke="#096dd9" stroke-width="1.15"/></svg><span class="n">0.00</span></span><span class="tag tr"><svg width="13" height="13" viewBox="0 0 13 13"><path d="M0.9 6.5C2.4 3.6 4.3 2.3 6.5 2.3S10.6 3.6 12.1 6.5C10.6 9.4 8.7 10.7 6.5 10.7S2.4 9.4 0.9 6.5Z" fill="none" stroke="#cf1322" stroke-width="1.15"/><circle cx="6.5" cy="6.5" r="1.9" fill="none" stroke="#cf1322" stroke-width="1.15"/></svg>个人报表</span></div></td>
<td>0.00</td><td>0.00</td><td>0.00</td>
<td><span class="dot"></span>用户</td>
<td>注册时间:2022-12-26 15:06<br>最近登录:2022-12-26 15:06<br>登录Ip:0.0.0.0</td>
<td><span class="lr" style="margin-left:16px">设置代理</span><span class="lk" style="margin-left:32px">编辑</span><span class="lk" style="margin-left:32px">充值</span><span class="lk" style="margin-left:32px">控制</span></td>
</tr>
</tbody></table></div>
</div>
<div class="abs" style="left:1775px;top:733px;width:84px;height:42px;background:#414141;border:1px solid #2c2c2c;border-radius:4px;z-index:6;font-size:12px;line-height:19px;white-space:nowrap"><svg class="abs" style="left:8px;top:6px" width="8" height="10" viewBox="0 0 8 10"><path d="M4 0.8V10M0.8 4L4 0.8 7.2 4" fill="none" stroke="#e9a866" stroke-width="0.9"/></svg><svg class="abs" style="left:8px;top:25px" width="8" height="10" viewBox="0 0 8 10"><path d="M4 0V9.2M0.8 6L4 9.2 7.2 6" fill="none" stroke="#8ed664" stroke-width="0.9"/></svg><div class="abs" style="left:21px;top:2px;color:#e9a866;letter-spacing:.3px">4.2 KB/s</div><div class="abs" style="left:21px;top:21px;color:#8ed664;letter-spacing:.3px">23.7 KB/s</div></div>
<div class="abs" style="left:1903px;top:0;width:17px;height:933px;background:#f1f1f1;z-index:7"><div class="abs" style="left:2px;top:17px;width:13px;height:356px;background:#c1c1c1"></div><svg class="abs" style="left:5px;top:7px" width="7" height="4" viewBox="0 0 7 4"><path d="M0 4L3.5 0 7 4z" fill="#a3a3a3"/></svg><svg class="abs" style="left:5px;top:922px" width="7" height="4" viewBox="0 0 7 4"><path d="M0 0L3.5 4 7 0z" fill="#505050"/></svg></div>
</body></html>
